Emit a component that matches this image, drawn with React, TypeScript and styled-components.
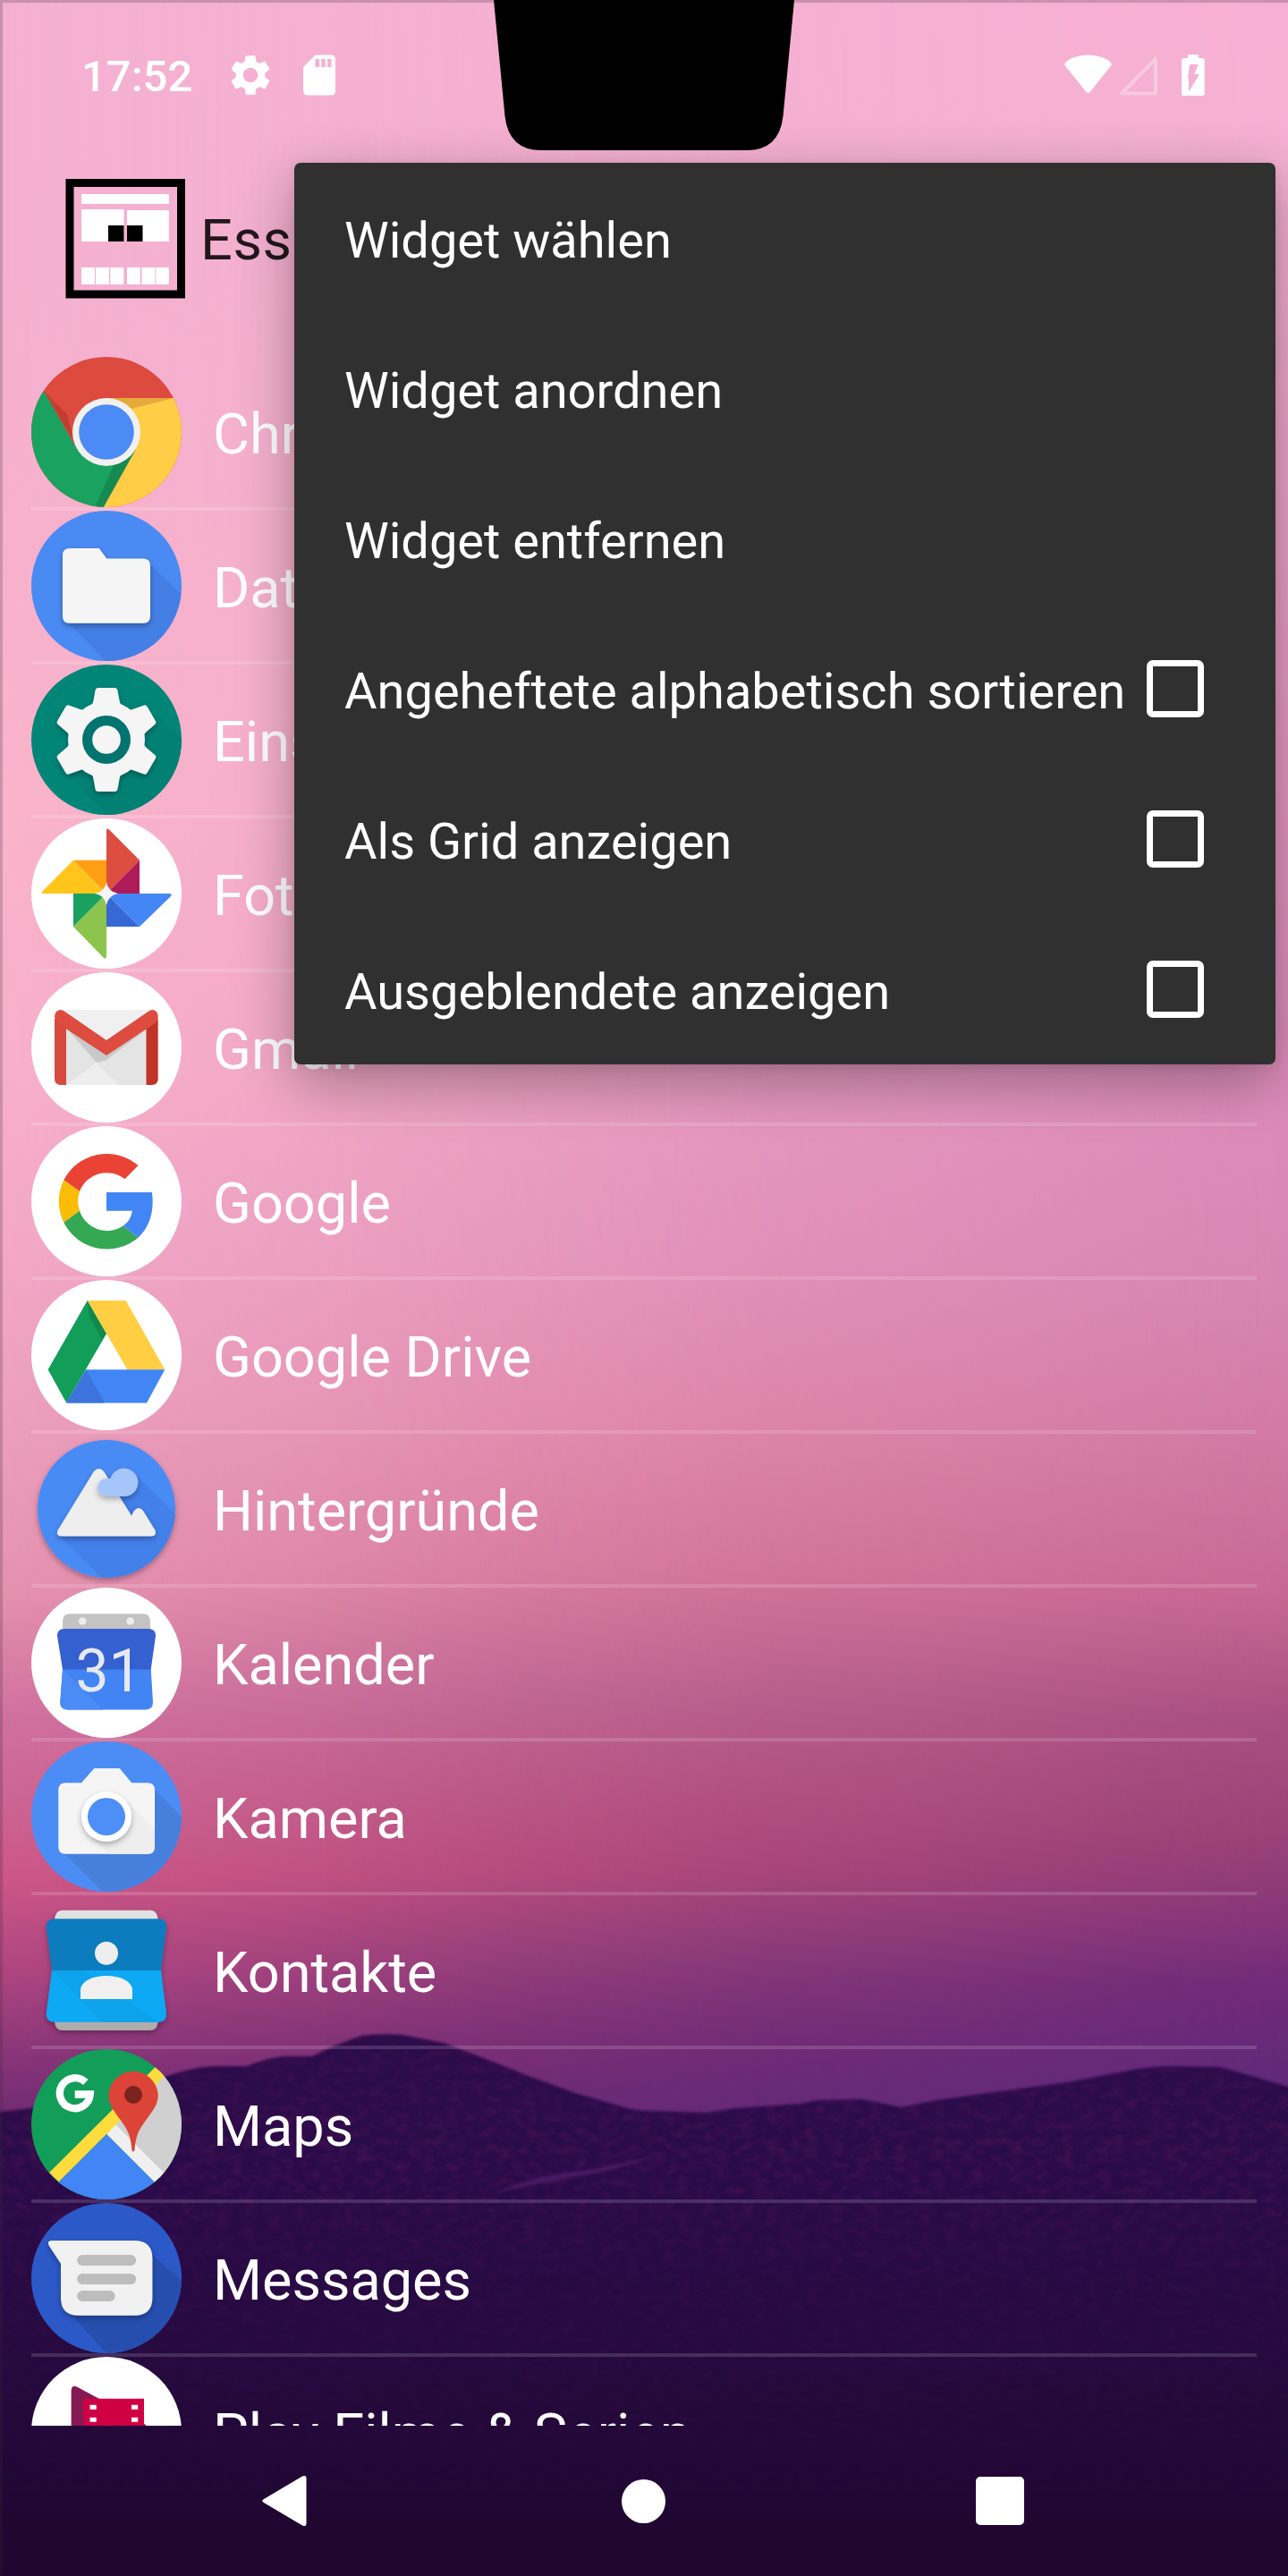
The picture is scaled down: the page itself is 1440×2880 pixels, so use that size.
import React from "react";
import styled, { createGlobalStyle } from "styled-components";

const GlobalStyle = createGlobalStyle`
  body { margin: 0; background: #1f0730; }
  * { box-sizing: border-box; }
`;

const Screen = styled.main`
  position: relative;
  isolation: isolate;
  display: grid;
  grid-template-rows: 168px 197px 1fr 168px;
  width: 1440px;
  height: 2880px;
  overflow: hidden;
  color: #fff;
  font-family: Roboto, "Liberation Sans", sans-serif;
`;

/* ---------- wallpaper ---------- */

const Wallpaper = styled.div`
  position: absolute;
  inset: 0;
  z-index: -1;
  isolation: isolate;

  &::after {
    content: "";
    position: absolute;
    inset: 0;
    box-shadow: inset 3px 3px 1px rgba(60, 40, 60, 0.24);
  }
`;

const SkyLayer = styled.div<{ $stops: string; $mask?: string }>`
  position: absolute;
  inset: 0;
  z-index: -1;
  background: linear-gradient(to bottom, ${(p) => p.$stops});
  ${(p) => (p.$mask ? `mask-image: linear-gradient(to right, ${p.$mask});` : "")}
`;

const Landscape = styled.svg`
  position: absolute;
  inset: 0;
  z-index: -1;
  display: block;
`;

const LEFT_SKY =
  "#f5b1d2 0, #f5b1d1 300px, #f7b2cd 600px, #fab4cb 900px, #f8b0ca 1200px, #f3a8c6 1400px, #eb9fbc 1600px, #e592af 1780px, #d1719f 1920px, #cd6795 2000px, #cd5787 2100px, #b04682 2200px, #90397a 2280px, #6c2872 2380px";
const MIDDLE_SKY =
  "#f6b0d2 0, #f4b0d0 300px, #f2acca 800px, #e99ec1 1200px, #e596bc 1400px, #e189ac 1600px, #d77a9e 1750px, #bd6590 1900px, #b85685 2000px, #b34a7b 2090px, #8f3f79 2190px, #762d75 2290px, #672a76 2370px";
const RIGHT_SKY =
  "#f7b0d3 0, #f4b0d2 180px, #eaa0c6 600px, #e094be 1000px, #dc8bb9 1250px, #d784b1 1450px, #d079a2 1620px, #c76894 1780px, #a94f80 1920px, #9c4377 2040px, #86357a 2150px, #702a78 2220px, #60297a 2330px";

const RIDGE =
  "M-10 2362 L0 2361 L35 2357 Q110 2330 188 2321 Q215 2311 241 2310 L276 2310 Q295 2302 317 2299 L349 2299 Q372 2287 404 2276 Q425 2273 450 2275 L496 2284 L551 2305 L588 2320 L643 2340 L698 2356 Q712 2360 726 2360 L790 2362 L822 2357 L895 2352 L914 2348 L964 2347 L1008 2356 L1047 2348 L1120 2338 L1194 2328 L1267 2314 Q1290 2310 1313 2310 L1364 2311 L1396 2320 L1450 2336 V2890 H-10 Z";

function Backdrop() {
  return (
    <Wallpaper aria-hidden>
      <SkyLayer $stops={LEFT_SKY} />
      <SkyLayer $stops={MIDDLE_SKY} $mask="transparent 0, rgba(0,0,0,0.2) 12%, rgba(0,0,0,0.8) 42%, #000 60%" />
      <SkyLayer
        $stops={RIGHT_SKY}
        $mask="transparent 25%, rgba(0,0,0,0.12) 45%, rgba(0,0,0,0.5) 72%, rgba(0,0,0,0.85) 90%, #000 100%"
      />
      <Landscape width="1440" height="2880" viewBox="0 0 1440 2880">
        <defs>
          <linearGradient id="ground" x1="0" y1="2270" x2="0" y2="2880" gradientUnits="userSpaceOnUse">
            <stop offset="0" stopColor="#2c0b4b" />
            <stop offset="0.3" stopColor="#290a48" />
            <stop offset="0.6" stopColor="#250a3e" />
            <stop offset="1" stopColor="#1e062e" />
          </linearGradient>
          <linearGradient id="grainFade" x1="0" y1="2270" x2="0" y2="2790" gradientUnits="userSpaceOnUse">
            <stop offset="0" stopColor="#888" />
            <stop offset="0.25" stopColor="#fff" />
            <stop offset="0.5" stopColor="#777" />
            <stop offset="1" stopColor="#000" />
          </linearGradient>
          <mask id="grainMask" maskUnits="userSpaceOnUse" x="0" y="2260" width="1440" height="540">
            <path d={RIDGE} fill="url(#grainFade)" />
          </mask>
          <filter id="grain" x="0" y="0" width="100%" height="100%" colorInterpolationFilters="sRGB">
            <feTurbulence type="fractalNoise" baseFrequency="0.07 0.11" numOctaves="3" seed="4" />
            <feColorMatrix values="0 0 0 0 0.3  0 0 0 0 0.08  0 0 0 0 0.33  1.8 0 0 0 -0.7" />
          </filter>
          <filter id="soft" x="-5%" y="-20%" width="110%" height="140%" colorInterpolationFilters="sRGB">
            <feGaussianBlur stdDeviation="1.6" />
          </filter>
        </defs>
        <path d={RIDGE} fill="url(#ground)" filter="url(#soft)" />
        <rect y="2270" width="1440" height="530" filter="url(#grain)" mask="url(#grainMask)" opacity="0.75" />
        <path d="M551 2452 Q600 2432 640 2428 T738 2408 Q690 2427 640 2434 Z" fill="#5a2470" opacity="0.6" filter="url(#soft)" />
      </Landscape>
    </Wallpaper>
  );
}

/* ---------- status bar ---------- */

const StatusBar = styled.header`
  display: flex;
  align-items: center;
  justify-content: space-between;
  padding: 0 93px 0 91px;
`;

const StatusGroup = styled.div<{ $gap: number }>`
  display: flex;
  align-items: center;
  gap: ${(p) => p.$gap}px;
`;

const Clock = styled.time`
  margin-right: 6px;
  padding-top: 2px;
  font-size: 49px;
  font-weight: 500;
  line-height: 1;
`;

const Glyph = styled.svg`
  display: block;
  flex: none;
`;

const Notch = styled.svg`
  position: absolute;
  top: 0;
  left: 552px;
  display: block;
`;

function Status() {
  return (
    <StatusBar>
      <StatusGroup $gap={36}>
        <Clock>17:52</Clock>
        <Glyph width="46" height="46" viewBox="1.9 1.9 20.2 20.2" fill="#fff">
          <path d="M19.14 12.94c.04-.3.06-.61.06-.94 0-.32-.02-.64-.07-.94l2.03-1.58a.49.49 0 0 0 .12-.61l-1.92-3.32a.488.488 0 0 0-.59-.22l-2.39.96c-.5-.38-1.03-.7-1.62-.94l-.36-2.54a.484.484 0 0 0-.48-.41h-3.84c-.24 0-.43.17-.47.41l-.36 2.54c-.59.24-1.13.57-1.62.94l-2.39-.96c-.22-.08-.47 0-.59.22L2.74 8.87c-.12.21-.08.47.12.61l2.03 1.58c-.05.3-.09.63-.09.94s.02.64.07.94l-2.03 1.58a.49.49 0 0 0-.12.61l1.92 3.32c.12.22.37.29.59.22l2.39-.96c.5.38 1.03.7 1.62.94l.36 2.54c.05.24.24.41.48.41h3.84c.24 0 .44-.17.47-.41l.36-2.54c.59-.24 1.13-.56 1.62-.94l2.39.96c.22.08.47 0 .59-.22l1.92-3.32c.12-.22.07-.47-.12-.61l-2.01-1.58zM12 15.6c-1.98 0-3.6-1.62-3.6-3.6s1.62-3.6 3.6-3.6 3.6 1.62 3.6 3.6-1.62 3.6-3.6 3.6z" />
        </Glyph>
        <Glyph width="36" height="46" viewBox="4 2 16 20" fill="#fff">
          <path d="M18 2h-8L4.02 8 4 20c0 1.1.9 2 2 2h12c1.1 0 2-.9 2-2V4c0-1.1-.9-2-2-2zm-6 6h-2V4h2v4zm3 0h-2V4h2v4zm3 0h-2V4h2v4z" />
        </Glyph>
      </StatusGroup>
      <StatusGroup $gap={0}>
        <Glyph width="157" height="47" viewBox="1190 61 157 47" fill="#fff">
          <path d="M1216.5 61.5 C1206 61.5 1196 65 1191 70 Q1189.600 71.500 1190.500 73 L1214.500 103 Q1216.500 105.200 1218.500 103 L1242.500 73 Q1243.400 71.500 1242 70 C1237 65 1227 61.500 1216.500 61.500Z" />
          <path d="M1292 66 V104.500 H1254 Z" fill="none" stroke="#fff" strokeOpacity="0.32" strokeWidth="4.200" strokeLinejoin="round" />
          <path
            fillRule="evenodd"
            d="M1328 61 H1340 V65 H1344.500 Q1346.700 65 1346.700 67.500 V104.500 Q1346.700 107 1344.500 107 H1323.300 Q1321 107 1321 104.500 V67.500 Q1321 65 1323.300 65 H1328 Z M1330 72 H1339.700 L1335 83 H1341 L1329 102.500 V87 H1328 Z"
          />
        </Glyph>
      </StatusGroup>
    </StatusBar>
  );
}

/* ---------- header ---------- */

const AppHeader = styled.section`
  display: flex;
  align-items: center;
  gap: 17px;
  padding-left: 73px;
  color: #21171c;
  font-size: 63px;
  line-height: 1;
`;

const HeaderTitle = styled.span`
  padding-top: 4px;
  letter-spacing: 0.6px;
`;

function LauncherLogo() {
  return (
    <Glyph width="134" height="134" viewBox="73 200 134 134">
      <rect x="78" y="204.500" width="124.500" height="124.500" fill="none" stroke="#000" strokeWidth="9" />
      <path
        fill="#fff"
        d="M91 217h98v11h-98z M91 234h47.500v36h-47.500z M142 235h47v35h-47z M91 299h15v19h-15z M107 299h15v19h-15z M123.300 299h15v19h-15z M142 299h14.700v19h-14.700z M158.400 299h15v19h-15z M174.300 299h14.700v19h-14.700z"
      />
      <path d="M121 252h17.500v18h-17.500z M142 252h17.500v18h-17.500z" />
    </Glyph>
  );
}

/* ---------- app list ---------- */

const AppList = styled.ul`
  margin: 0;
  padding: 34px 35px 0;
  overflow: hidden;
  list-style: none;
`;

const AppRow = styled.li`
  display: flex;
  align-items: center;
  gap: 35px;
  height: 172px;
  border-bottom: 4px solid rgba(255, 255, 255, 0.15);
  font-size: 63px;
  line-height: 1;
`;

const AppLabel = styled.span`
  padding-top: 5px;
  white-space: nowrap;
`;

const IconSvg = styled.svg`
  display: block;
  flex: none;
  width: 168px;
  height: 168px;
  overflow: visible;
`;

function Disc({ id, fill, children }: { id: string; fill: string; children: React.ReactNode }) {
  return (
    <>
      <clipPath id={id}>
        <circle cx="84" cy="84" r="84" />
      </clipPath>
      <circle cx="84" cy="84" r="84" fill={fill} />
      <g clipPath={`url(#${id})`}>{children}</g>
    </>
  );
}

const ChromeIcon = () => (
  <Disc id="chrome" fill="#dd4b3e">
    <path d="M14 38.600 L40 64 L47 93 Z" fill="#a93526" opacity="0.55" />
    <path d="M14 38.600 L51 103 L84 84 L117 103 L80.700 168 L0 168 L0 20 Z" fill="#1aa260" />
    <path d="M159 46 H84 V84 L117 103 L80.700 168 H168 V46 Z" fill="#ffcd46" />
    <path d="M84 46 H159 L112 58 Z" fill="#e0a338" opacity="0.85" />
    <path d="M117 103 L80.700 168 L72 166 L92 121 Z" fill="#14804a" opacity="0.65" />
    <circle cx="84" cy="84" r="38" fill="#f1f1f1" />
    <circle cx="84" cy="84" r="30.800" fill="#4c8bf5" />
  </Disc>
);

const FilesIcon = () => (
  <Disc id="files" fill="#4a8af3">
    <path d="M133 60 L175 100 V175 H90 L40 124 Z" fill="#447fe6" />
    <path
      d="M43 42 H75.700 L84.300 53.400 H125 Q133 53.400 133 61.400 V117.700 Q133 125.700 125 125.700 H43 Q35 125.700 35 117.700 V50 Q35 42 43 42Z"
      fill="#f5f5f5"
      filter="url(#drop)"
    />
  </Disc>
);

const TOOTH = "M62 52 Q68.500 47 69.500 40 L71.500 29 Q72 26 75 26 H93 Q96 26 96.500 29 L98.500 40 Q99.500 47 106 52 Z";

const SettingsIcon = () => (
  <Disc id="settings" fill="#018577">
    <path d="M139 55 L175 90 V175 H90 L42 124 Z" fill="#028074" />
    <g filter="url(#drop)" fill="#f5f5f5">
      <circle cx="84" cy="84" r="43" />
      {[0, 60, 120, 180, 240, 300].map((angle) => (
        <path key={angle} d={TOOTH} transform={`rotate(${angle} 84 84)`} />
      ))}
    </g>
    <circle cx="84" cy="84" r="27" fill="#03736f" />
    <circle cx="84" cy="84" r="15.800" fill="#f5f5f5" />
  </Disc>
);

const PhotosIcon = () => (
  <Disc id="photos" fill="#fff">
    <path d="M84 84 V13 Q84.500 10.500 87 12.500 L121 46.800Z" fill="#dd4d40" />
    <path d="M121 46.800 V84 H84Z" fill="#ad1b59" />
    <path d="M84 84 H155 Q157.500 84.500 156 87 L121 121Z" fill="#4486f4" />
    <path d="M121 121 H84 V84Z" fill="#3768d6" />
    <path d="M84 84 V155 Q83.500 157.500 81 156 L47 121Z" fill="#8dc44e" />
    <path d="M47 121 V84 H84Z" fill="#1ba15f" />
    <path d="M84 84 H13 Q10.500 83.500 12.500 81.500 L47 46.800Z" fill="#ffc51b" />
    <path d="M47 46.800 H84 V84Z" fill="#ff9e13" />
    <path d="M84 71 Q86 82 97 84 Q86 86 84 97 Q82 86 71 84 Q82 82 84 71Z" fill="#f5f5f5" />
  </Disc>
);

const GmailIcon = () => (
  <Disc id="gmail" fill="#fff">
    <path d="M33 42 H135 L128.500 126 H39 Z" fill="#f0f0f0" />
    <path d="M39 60 L84 93 L128.500 60 V126 H39Z" fill="#e4e4e4" />
    <path d="M39 62 L84 92 L126 66 L84 98 L73 101 Z" fill="#c9c9c9" />
    <path d="M39 126 L73 101 L98 126Z" fill="#eeeeee" />
    <path d="M26 52 H39 V126 H33 Q26 126 26 119Z" fill="#d54a3c" />
    <path d="M128.500 60 L141.700 52 V119 Q141.700 126 134.700 126 H128.500Z" fill="#bf3527" />
    <path d="M26 49 Q27 42 33 42 L36 43 L84 76 L132 43 L135 42 Q141 42 141.700 49 Q141.700 55 137 58 L84 93 L31 58 Q26 54 26 49Z" fill="#dd4c3f" />
  </Disc>
);

const GoogleIcon = () => (
  <Disc id="google" fill="#fff">
    <path d="M36.300 60.300 A54 54 0 0 1 119.500 44 L104.500 59.200 A32.500 32.500 0 0 0 54 73Z" fill="#ea4335" />
    <path d="M36.300 60.300 A54 54 0 0 0 36.300 107.800 L54 94.700 A33 33 0 0 1 54 73Z" fill="#fbbc05" />
    <path d="M36.300 107.800 A54 54 0 0 0 119.500 124.700 L102.700 111.600 A32.500 32.500 0 0 1 54 94.700Z" fill="#34a853" />
    <path d="M84 74 H135 Q139 106 119.500 124.700 L102.700 111.600 Q111 106 113 94.700 H84Z" fill="#4285f4" />
  </Disc>
);

const DriveIcon = () => (
  <Disc id="drive" fill="#fff">
    <path d="M62.700 23 L84 60 L39.300 137.400 L18.700 100.200Z" fill="#129d58" />
    <path d="M62.700 23 L84 60 L79 66 L65 42Z" fill="#0f7d44" opacity="0.6" />
    <path d="M62.700 23 H105.700 L149.300 100.200 H107.300Z" fill="#ffce42" />
    <path d="M61 100.200 H149.300 L129 137.400 H39.300Z" fill="#4285f4" />
    <path d="M61 100.200 L39.300 137.400 H82Z" fill="#3c73dc" />
  </Disc>
);

const WallpapersIcon = () => (
  <>
    <clipPath id="wallpapers">
      <circle cx="84" cy="84" r="77" />
    </clipPath>
    <circle cx="84" cy="84" r="77" fill="#4a8bf5" filter="url(#drop)" />
    <g clipPath="url(#wallpapers)">
      <path d="M114 43 L170 99 V170 H88 L30 113Z" fill="#4380ea" />
      <path
        d="M70 42 Q75.700 36 81 42 L112 91.600 L115 86 Q120 80 125 86 L138.500 108 Q140.500 114.500 134 114.500 H34 Q27 114 29.500 108Z"
        fill="#eeeeee"
        filter="url(#drop)"
      />
      <path d="M84 50 H88.500 A15.700 15.700 0 1 1 103 70 H84 A10 10 0 0 1 84 50Z" fill="#a6c5fa" filter="url(#drop)" />
    </g>
  </>
);

const DayNumber = styled.text`
  font-family: Roboto, "Liberation Sans", sans-serif;
  font-size: 66px;
  font-weight: 400;
  fill: #e6e9f0;
`;

const CalendarIcon = () => (
  <Disc id="calendar" fill="#fff">
    <path d="M35 48 V38 Q35 29.300 43 29.300 H125 Q133 29.300 133 38 V48Z" fill="#c3c3c3" />
    <circle cx="57.300" cy="37.500" r="4.300" fill="#eee" />
    <circle cx="110.700" cy="37.500" r="4.300" fill="#eee" />
    <path d="M35 91 H133.700 L136 128 Q136 136.400 128 136.400 H40 Q32.300 136.400 32.300 128Z" fill="#4284f3" />
    <path d="M35 91 L80 136.400 H40 Q32.300 136.400 32.300 128Z" fill="#4b8bf5" />
    <path d="M29 54 Q29 46 37 46 H131 Q139 46 139 54 L133.700 91.600 H35Z" fill="#3560d0" />
    <DayNumber x="86.500" y="115.500" textAnchor="middle">
      31
    </DayNumber>
  </Disc>
);

const CameraIcon = () => (
  <Disc id="camera" fill="#4c8cf5">
    <path d="M138 54 L172 88 V172 H84 L36 124Z" fill="#4780dc" />
    <path
      d="M38.300 46.300 H56 L70.300 30 H98.700 L112.300 46.300 H130 Q138 46.300 138 54.300 V117.700 Q138 125.700 130 125.700 H38.300 Q30.300 125.700 30.300 117.700 V54.300 Q30.300 46.300 38.300 46.300Z"
      fill="#f5f5f5"
    />
    <path d="M104 64 L138 98 V117 Q138 125.700 130 125.700 H86 L64 104Z" fill="#eeeeee" />
    <circle cx="84" cy="84" r="28" fill="#fff" filter="url(#drop)" />
    <circle cx="84" cy="84" r="21" fill="#4d8ef7" />
  </Disc>
);

const ContactsIcon = () => (
  <g filter="url(#drop)">
    <path d="M26 30 Q26 16.700 35 16.700 H132.700 Q141.700 16.700 141.700 30Z" fill="#e1e1e1" />
    <path d="M26 138 H141.700 Q141.700 151 132.700 151 H35 Q26 151 26 138Z" fill="#adadad" />
    <path d="M23 84 H145 L151 132 Q151.500 141.700 142.500 141.700 H25.500 Q16.500 141.700 16.700 132Z" fill="#08a9f4" />
    <path d="M23 84 L80 141.700 H142 L60 84Z" fill="#0c9fe8" opacity="0.7" />
    <path d="M16.700 36 Q16.500 26.300 25.500 26.300 H142.500 Q151.500 26.300 151 36 L145 84 H23Z" fill="#0a7bbf" />
    <circle cx="84" cy="64.700" r="13" fill="#eeeeee" />
    <path d="M55 116 V105 C58 85 110 85 113 105 V116Z" fill="#f0f0f0" />
  </g>
);

const MapsIcon = () => (
  <Disc id="maps" fill="#129d58">
    <path d="M84 84 L148 20 L180 0 V180Z" fill="#d0d0d0" />
    <path d="M94 84 L158 148 L146 157 L84 95Z" fill="#f0f0f0" />
    <path d="M84 95 L22 157 L40 175 H140 L146 157Z" fill="#4285f4" />
    <path d="M138.700 20 L148.700 30.300 L30.700 148.300 L20 138Z M148 11 L158 21 L148.700 30.300 L138.700 20Z" fill="#ffdc3e" />
    <path d="M60.700 37 A17 17 0 1 0 65.800 50.500 H48.700" fill="none" stroke="#fff" strokeWidth="8.300" />
    <path d="M112.500 113 C111 96 108 90 98 77 C92 68 86.300 62 86.300 51 A27.800 27.800 0 0 1 141.800 51 C141.800 62 136 68 130 77 C120 90 117 96 115.500 113 Q114 116 112.500 113Z" fill="#dc4437" />
    <circle cx="114" cy="51" r="10" fill="#7b231e" />
  </Disc>
);

const MessagesIcon = () => (
  <Disc id="messages" fill="#2c59c8">
    <path d="M134 57 L172 90 V172 H88 L44 124Z" fill="#264eae" />
    <path
      d="M22 42 H115 Q135.400 42 135.400 62 V105.700 Q135.400 125.700 115 125.700 H53 Q33 125.700 33 105.700 V67.700 L20 48 Q17 43 22 42Z"
      fill="#f1f1f1"
      filter="url(#drop)"
    />
    <g fill="#bdbdbd">
      <rect x="51.200" y="58" width="66" height="12" rx="6" />
      <rect x="51.200" y="79" width="66" height="12" rx="6" />
      <rect x="51.200" y="98" width="42.500" height="12" rx="6" />
    </g>
  </Disc>
);

const MoviesIcon = () => (
  <Disc id="movies" fill="#fff">
    <path d="M44.600 38 Q45 31 51 33.500 L78 48 L128 76 V130 L44.600 136Z" fill="#851a52" />
    <path d="M58.400 46.700 H126 V125 H58.400Z" fill="#cf0044" />
    <path
      d="M65.500 53.700h7.200v5h-7.200z M112 53.700h7.200v5h-7.200z M65.500 67.700h7.200v5h-7.200z M112 67.700h7.200v5h-7.200z M65.500 81.700h7.200v5h-7.200z M112 81.700h7.200v5h-7.200z"
      fill="#fff"
    />
  </Disc>
);

const APPS = [
  { name: "Chrome", Icon: ChromeIcon },
  { name: "Dateien", Icon: FilesIcon },
  { name: "Einstellungen", Icon: SettingsIcon },
  { name: "Fotos", Icon: PhotosIcon },
  { name: "Gmail", Icon: GmailIcon },
  { name: "Google", Icon: GoogleIcon },
  { name: "Google Drive", Icon: DriveIcon },
  { name: "Hintergründe", Icon: WallpapersIcon },
  { name: "Kalender", Icon: CalendarIcon },
  { name: "Kamera", Icon: CameraIcon },
  { name: "Kontakte", Icon: ContactsIcon },
  { name: "Maps", Icon: MapsIcon },
  { name: "Messages", Icon: MessagesIcon },
  { name: "Play Filme & Serien", Icon: MoviesIcon },
];

/* ---------- overflow menu ---------- */

const Menu = styled.div`
  position: absolute;
  top: 182px;
  left: 329px;
  width: 1097px;
  border-radius: 7px;
  background: #303030;
  box-shadow: 0 20px 64px rgba(0, 0, 0, 0.32), 0 2px 12px rgba(0, 0, 0, 0.08);
`;

const MenuItem = styled.div`
  display: flex;
  align-items: center;
  justify-content: space-between;
  height: 168px;
  padding: 0 80px 0 56px;
  font-size: 56px;
  line-height: 1;
  white-space: nowrap;
`;

const MenuLabel = styled.span`
  padding-top: 5px;
`;

const Checkbox = styled.span`
  flex: none;
  width: 64px;
  height: 64px;
  border: 7px solid #fff;
  border-radius: 7px;
`;

const MENU = [
  { label: "Widget wählen" },
  { label: "Widget anordnen" },
  { label: "Widget entfernen" },
  { label: "Angeheftete alphabetisch sortieren", checkable: true },
  { label: "Als Grid anzeigen", checkable: true },
  { label: "Ausgeblendete anzeigen", checkable: true },
];

/* ---------- navigation bar ---------- */

const NavBar = styled.nav`
  display: flex;
  align-items: center;
  padding-left: 293px;
`;

const HomeDot = styled.span`
  width: 49px;
  height: 49px;
  margin-left: 352px;
  border-radius: 50%;
  background: #fff;
`;

const RecentsSquare = styled.span`
  width: 54px;
  height: 54px;
  margin-left: 347px;
  border-radius: 5px;
  background: #fff;
`;

export default function App() {
  return (
    <>
      <GlobalStyle />
      <Screen>
        <Backdrop />
        <Status />
        <AppHeader>
          <LauncherLogo />
          <HeaderTitle>Essentials</HeaderTitle>
        </AppHeader>
        <AppList>
          {APPS.map(({ name, Icon }, index) => (
            <AppRow key={name}>
              <IconSvg viewBox="0 0 168 168">
                {index === 0 && (
                  <filter id="drop" x="-20%" y="-20%" width="140%" height="150%">
                    <feDropShadow dx="0" dy="3" stdDeviation="3" floodColor="#000" floodOpacity="0.3" />
                  </filter>
                )}
                <Icon />
              </IconSvg>
              <AppLabel>{name}</AppLabel>
            </AppRow>
          ))}
        </AppList>
        <NavBar>
          <Glyph width="50" height="58" viewBox="0 0 50 58" fill="#fff">
            <path d="M45 1.500 Q49.500 -0.500 49.500 4 V54 Q49.500 58.500 45 56.500 L2 31 Q-1.500 29 2 27Z" />
          </Glyph>
          <HomeDot />
          <RecentsSquare />
        </NavBar>
        <Notch width="336" height="168" viewBox="0 0 336 168">
          <path d="M0 0 H336 L323.500 130 Q319 168 283 168 H53 Q17 168 12.500 130Z" />
        </Notch>
        <Menu>
          {MENU.map(({ label, checkable }) => (
            <MenuItem key={label}>
              <MenuLabel>{label}</MenuLabel>
              {checkable && <Checkbox />}
            </MenuItem>
          ))}
        </Menu>
      </Screen>
    </>
  );
}
